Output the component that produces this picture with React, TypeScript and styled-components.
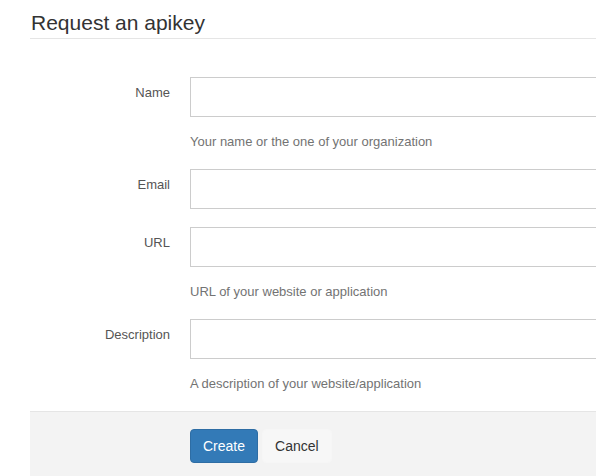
import React from "react";
import styled, { createGlobalStyle } from "styled-components";

const Global = createGlobalStyle`
  html, body { margin: 0; padding: 0; background: #fff; overflow: hidden; }
  body { font-family: "Liberation Sans", Arial, sans-serif; color: #333; }
  * { box-sizing: border-box; }
`;

const Page = styled.div`
  width: 100%;
  overflow: hidden;
  padding-left: 30px;
`;

const Legend = styled.h1`
  margin: 11px 0 0;
  padding: 0 0 4px 1px;
  font-size: 21px;
  font-weight: normal;
  line-height: 23px;
  color: #333;
  border-bottom: 1px solid #e5e5e5;
`;

const Form = styled.form`
  display: flex;
  flex-direction: column;
  padding-top: 38px;
`;

const Group = styled.div`
  display: grid;
  grid-template-columns: 140px 1fr;
  column-gap: 20px;
  margin-bottom: 18px;
`;

const Label = styled.label`
  text-align: right;
  padding-top: 6px;
  font-size: 13px;
  line-height: 20px;
  color: #555;
`;

const Field = styled.div`
  display: flex;
  flex-direction: column;
  margin-right: -4px;
`;

const Input = styled.input`
  height: 40px;
  width: 100%;
  border: 1px solid #ccc;
  border-radius: 0;
  padding: 6px 12px;
  font-size: 14px;
  font-family: inherit;
  background: #fff;
  outline: none;
`;

const Help = styled.span`
  margin-top: 15px;
  font-size: 13px;
  line-height: 19px;
  color: #737373;
`;

const Actions = styled.div`
  display: flex;
  gap: 4px;
  padding: 17px 0 13px 160px;
  background: #f3f3f3;
  border-top: 1px solid #e5e5e5;
`;

const Button = styled.button<{ $primary?: boolean }>`
  height: 34px;
  padding: 6px 12px;
  font-size: 14px;
  line-height: 20px;
  font-family: inherit;
  border-radius: 4px;
  border: 1px solid ${(p) => (p.$primary ? "#2e6da4" : "#f6f6f6")};
  background: ${(p) => (p.$primary ? "#337ab7" : "#f7f7f7")};
  color: ${(p) => (p.$primary ? "#fff" : "#333")};
  cursor: pointer;
`;

const fields = [
  { label: "Name", help: "Your name or the one of your organization" },
  { label: "Email" },
  { label: "URL", help: "URL of your website or application" },
  { label: "Description", help: "A description of your website/application" },
];

export default function App() {
  return (
    <Page>
      <Global />
      <Legend>Request an apikey</Legend>
      <Form>
        {fields.map((f) => (
          <Group key={f.label}>
            <Label>{f.label}</Label>
            <Field>
              <Input type="text" />
              {f.help && <Help>{f.help}</Help>}
            </Field>
          </Group>
        ))}
        <Actions>
          <Button type="button" $primary>
            Create
          </Button>
          <Button type="button">Cancel</Button>
        </Actions>
      </Form>
    </Page>
  );
}
